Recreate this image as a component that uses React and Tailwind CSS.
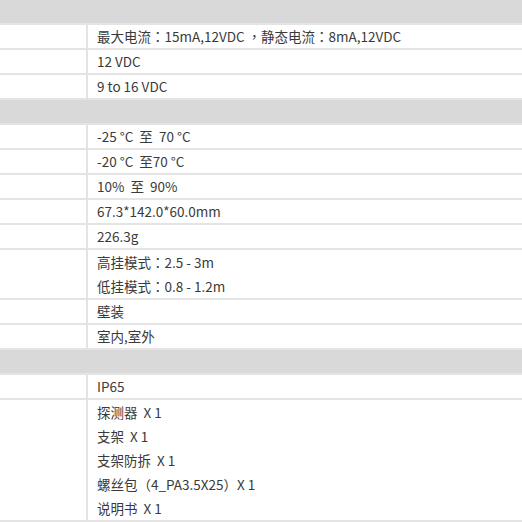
import React from "react";

// 规格表：左列空白，右列为参数值
const sections = [
  {
    rows: [
      ["最大电流：15mA,12VDC ，静态电流：8mA,12VDC"],
      ["12 VDC"],
      ["9 to 16 VDC"],
    ],
  },
  {
    rows: [
      ["-25 °C  至  70 °C"],
      ["-20 °C  至70 °C"],
      ["10%  至  90%"],
      ["67.3*142.0*60.0mm"],
      ["226.3g"],
      ["高挂模式：2.5 - 3m", "低挂模式：0.8 - 1.2m"],
      ["壁装"],
      ["室内,室外"],
    ],
  },
  {
    rows: [
      ["IP65"],
      ["探测器  X 1", "支架  X 1", "支架防拆  X 1", "螺丝包（4_PA3.5X25）X 1", "说明书  X 1"],
    ],
  },
];

function Row({ lines }) {
  const multi = lines.length > 2;
  return (
    <div className="flex border-b-2 border-[#e4e4e4]">
      <div className="w-[88px] shrink-0 border-r-2 border-[#e4e4e4]" />
      <div className="flex-1 pl-[9px]">
        {lines.map((t, i) => (
          <div
            key={i}
            className={`whitespace-pre ${multi ? "h-[24px] leading-[24px]" : "h-[23px] leading-[23px]"} ${
              i === 0 && lines.length === 2 ? "h-[25px] leading-[25px]" : ""
            }`}
          >
            {t}
          </div>
        ))}
      </div>
    </div>
  );
}

export default function App() {
  return (
    <div
      className="w-[522px] h-[522px] overflow-hidden bg-white text-[13.5px] text-[#3a3a3a]"
      style={{ fontFamily: '"Noto Sans CJK TC", "Noto Sans CJK SC", sans-serif' }}
    >
      {sections.map((s, i) => (
        <div key={i}>
          <div className="h-[25px] bg-[#d9d9d9] border-b-2 border-[#e4e4e4]" />
          {s.rows.map((lines, j) => (
            <Row key={j} lines={lines} />
          ))}
        </div>
      ))}
    </div>
  );
}
